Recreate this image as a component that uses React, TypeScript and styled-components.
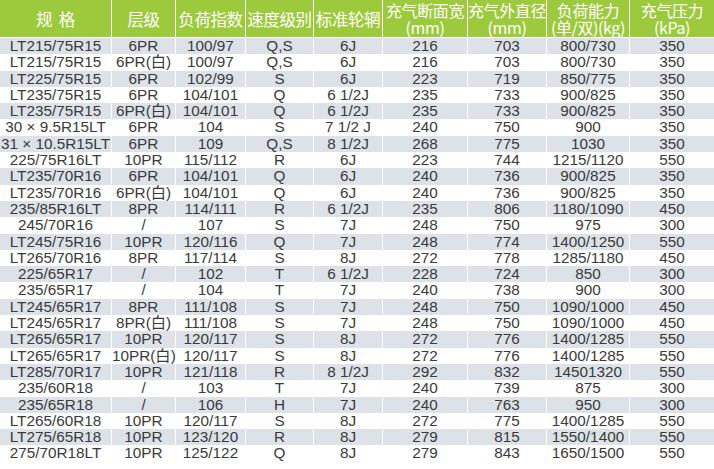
import React from "react";
import styled, { createGlobalStyle } from "styled-components";

const GlobalStyle = createGlobalStyle`
  html, body { margin: 0; padding: 0; background: #ffffff; }
  body { font-family: "Liberation Sans", Arial, sans-serif; }
`;

const COLS = "111px 63px 69px 67px 68px 84px 78px 82px 1fr";

const Table = styled.div`
  width: 714px;
  display: flex;
  flex-direction: column;
  gap: 1px;
  background: #ffffff;
`;

const HeaderRow = styled.div`
  display: grid;
  grid-template-columns: ${COLS};
  column-gap: 1px;
  height: 37px;
`;

const HeaderCell = styled.div`
  background: #9dca3c;
  color: #ffffff;
  font-family: "Noto Sans CJK SC", "Liberation Sans", sans-serif;
  font-size: 16.5px;
  letter-spacing: -0.4px;
  white-space: pre;
  display: flex;
  flex-direction: column;
  align-items: center;
  justify-content: center;
  text-align: center;
`;

const HeaderLine = styled.span<{ $compact: boolean }>`
  display: block;
  line-height: ${(p) => (p.$compact ? "16.5px" : "20px")};
  font-size: ${(p) => (p.$compact ? "16px" : "16.5px")};
`;

const Body = styled.div`
  display: flex;
  flex-direction: column;
`;

const Row = styled.div`
  display: grid;
  grid-template-columns: ${COLS};
  column-gap: 1px;
  height: 16.3px;
`;

const Cell = styled.div<{ $shaded: boolean }>`
  background: ${(p) => (p.$shaded ? "#dde2e8" : "#ffffff")};
  color: #3a3a3a;
  font-family: "Liberation Sans", Arial, "Noto Sans CJK SC", sans-serif;
  font-size: 15.3px;
  line-height: 16.3px;
  text-align: center;
  white-space: nowrap;
`;

const headers: string[][] = [
  ["规  格"],
  ["层级"],
  ["负荷指数"],
  ["速度级别"],
  ["标准轮辋"],
  ["充气断面宽", "(mm)"],
  ["充气外直径", "(mm)"],
  ["负荷能力", "(单/双)(kg)"],
  ["充气压力", "(kPa)"],
];

const rows: string[][] = [
  ["LT215/75R15", "6PR", "100/97", "Q,S", "6J", "216", "703", "800/730", "350"],
  ["LT215/75R15", "6PR(白)", "100/97", "Q,S", "6J", "216", "703", "800/730", "350"],
  ["LT225/75R15", "6PR", "102/99", "S", "6J", "223", "719", "850/775", "350"],
  ["LT235/75R15", "6PR", "104/101", "Q", "6 1/2J", "235", "733", "900/825", "350"],
  ["LT235/75R15", "6PR(白)", "104/101", "Q", "6 1/2J", "235", "733", "900/825", "350"],
  ["30 × 9.5R15LT", "6PR", "104", "S", "7 1/2 J", "240", "750", "900", "350"],
  ["31 × 10.5R15LT", "6PR", "109", "Q,S", "8 1/2J", "268", "775", "1030", "350"],
  ["225/75R16LT", "10PR", "115/112", "R", "6J", "223", "744", "1215/1120", "550"],
  ["LT235/70R16", "6PR", "104/101", "Q", "6J", "240", "736", "900/825", "350"],
  ["LT235/70R16", "6PR(白)", "104/101", "Q", "6J", "240", "736", "900/825", "350"],
  ["235/85R16LT", "8PR", "114/111", "R", "6 1/2J", "235", "806", "1180/1090", "450"],
  ["245/70R16", "/", "107", "S", "7J", "248", "750", "975", "300"],
  ["LT245/75R16", "10PR", "120/116", "Q", "7J", "248", "774", "1400/1250", "550"],
  ["LT265/70R16", "8PR", "117/114", "S", "8J", "272", "778", "1285/1180", "450"],
  ["225/65R17", "/", "102", "T", "6 1/2J", "228", "724", "850", "300"],
  ["235/65R17", "/", "104", "T", "7J", "240", "738", "900", "300"],
  ["LT245/65R17", "8PR", "111/108", "S", "7J", "248", "750", "1090/1000", "450"],
  ["LT245/65R17", "8PR(白)", "111/108", "S", "7J", "248", "750", "1090/1000", "450"],
  ["LT265/65R17", "10PR", "120/117", "S", "8J", "272", "776", "1400/1285", "550"],
  ["LT265/65R17", "10PR(白)", "120/117", "S", "8J", "272", "776", "1400/1285", "550"],
  ["LT285/70R17", "10PR", "121/118", "R", "8 1/2J", "292", "832", "14501320", "550"],
  ["235/60R18", "/", "103", "T", "7J", "240", "739", "875", "300"],
  ["235/65R18", "/", "106", "H", "7J", "240", "763", "950", "300"],
  ["LT265/60R18", "10PR", "120/117", "S", "8J", "272", "775", "1400/1285", "550"],
  ["LT275/65R18", "10PR", "123/120", "R", "8J", "279", "815", "1550/1400", "550"],
  ["275/70R18LT", "10PR", "125/122", "Q", "8J", "279", "843", "1650/1500", "550"],
];

export default function App() {
  return (
    <>
      <GlobalStyle />
      <Table>
        <HeaderRow>
          {headers.map((h, i) => (
            <HeaderCell key={i}>
              {h.map((line, j) => (
                <HeaderLine key={j} $compact={h.length > 1}>
                  {line}
                </HeaderLine>
              ))}
            </HeaderCell>
          ))}
        </HeaderRow>
        <Body>
          {rows.map((r, i) => (
            <Row key={i}>
              {r.map((c, j) => (
                <Cell key={j} $shaded={i % 2 === 0}>
                  {c}
                </Cell>
              ))}
            </Row>
          ))}
        </Body>
      </Table>
    </>
  );
}
